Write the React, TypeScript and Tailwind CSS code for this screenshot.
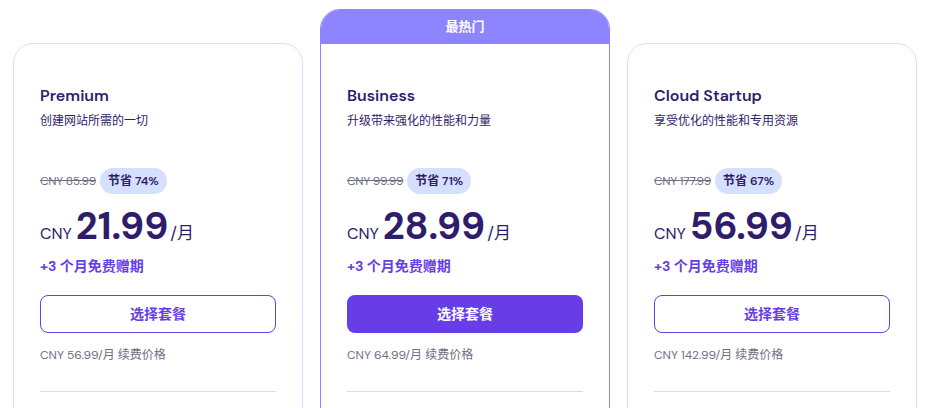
const plans = [
  {
    name: "Premium",
    desc: "创建网站所需的一切",
    old: "CNY 85.99",
    save: "节省 74%",
    price: "21.99",
    renew: "CNY 56.99/月 续费价格",
    popular: false,
  },
  {
    name: "Business",
    desc: "升级带来强化的性能和力量",
    old: "CNY 99.99",
    save: "节省 71%",
    price: "28.99",
    renew: "CNY 64.99/月 续费价格",
    popular: true,
  },
  {
    name: "Cloud Startup",
    desc: "享受优化的性能和专用资源",
    old: "CNY 177.99",
    save: "节省 67%",
    price: "56.99",
    renew: "CNY 142.99/月 续费价格",
    popular: false,
  },
];

type Plan = (typeof plans)[number];

function CardBody({ plan }: { plan: Plan }) {
  return (
    <div className="px-[26px] pt-10 pb-10">
      {/* Title */}
      <h3 className="text-base leading-6 font-semibold text-[#2f1c6a]">{plan.name}</h3>
      <p className="mt-1 text-xs leading-[18px] text-[#2f1c6a]">{plan.desc}</p>

      {/* Old price + badge */}
      <div className="mt-[38px] flex items-center gap-1">
        <span className="text-xs tracking-tight text-[#6d7081] line-through">{plan.old}</span>
        <span className="flex h-[26px] items-center rounded-full bg-[#d5dfff] px-2 text-xs font-semibold text-[#2f1c6a]">
          {plan.save}
        </span>
      </div>

      {/* Price */}
      <div className="mt-[13px] flex items-baseline text-[#2f1c6a]">
        <span className="mr-1 text-base">CNY</span>
        <span className="text-[38px] leading-none font-bold">{plan.price}</span>
        <span className="ml-0.5 text-[17px]">/月</span>
      </div>

      <p className="mt-[9px] text-sm leading-5 font-bold text-[#673de6]">+3 个月免费赠期</p>

      {/* Button */}
      <button
        className={
          plan.popular
            ? "mt-[19px] h-[38px] w-full rounded-lg bg-[#673de6] text-sm font-bold text-white"
            : "mt-[19px] h-[38px] w-full rounded-lg border border-[#673de6] bg-white text-sm font-bold text-[#673de6]"
        }
      >
        选择套餐
      </button>

      <p className="mt-[13px] text-xs leading-[18px] text-[#6d7081]">{plan.renew}</p>

      <div className="mt-[27px] h-px bg-[#dadce0]" />
    </div>
  );
}

export default function App() {
  return (
    <div
      className="h-[408px] w-[925px] overflow-hidden bg-white"
      style={{ fontFamily: '"DM Sans", Inter, "Noto Sans CJK SC", sans-serif' }}
    >
      <div className="flex items-start gap-[17px] px-[13px] pt-[9px]">
        {plans.map((plan) =>
          plan.popular ? (
            <div
              key={plan.name}
              className="w-[290px] shrink-0 overflow-hidden rounded-[20px] border border-[#8c85ff] bg-white"
            >
              <div className="flex h-[34px] items-center justify-center bg-[#8c85ff] text-[13px] font-bold text-white">
                最热门
              </div>
              <CardBody plan={plan} />
            </div>
          ) : (
            <div
              key={plan.name}
              className="mt-[34px] w-[290px] shrink-0 rounded-[20px] border border-[#d5dfff] bg-white"
            >
              <CardBody plan={plan} />
            </div>
          )
        )}
      </div>
    </div>
  );
}
